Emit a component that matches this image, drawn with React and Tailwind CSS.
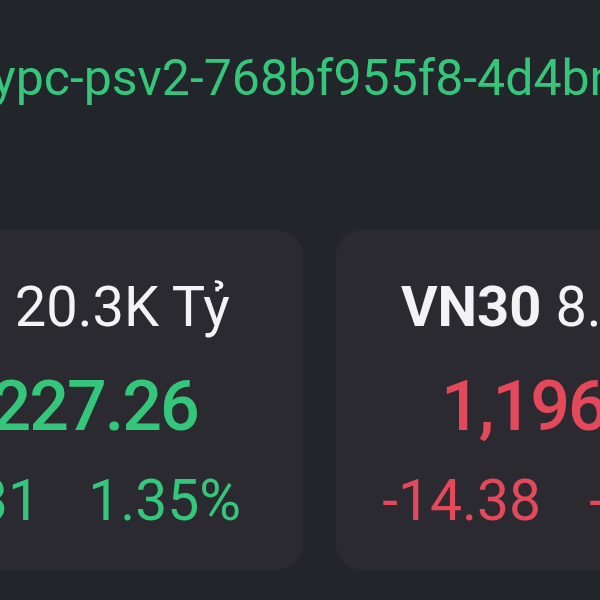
import React from 'react';

const cards = [
    { name: 'VNI', value: '20.3K Tỷ', price: '1,227.26', change: '16.31', percent: '1.35%', up: true },
    { name: 'VN30', value: '8.5K Tỷ', price: '1,196.66', change: '-14.38', percent: '-1.19%', up: false },
];

const IndexCard = ({ card }) => {
    const color = card.up ? 'text-[#34c77b]' : 'text-[#e4495b]';
    return (
        <div className="w-[468px] h-[340px] shrink-0 rounded-[26px] bg-[#2b2a30] pt-[49px] flex flex-col items-center">
            <div className="flex items-baseline whitespace-nowrap text-[56px] leading-none text-[#f3f3f5]">
                <span className="font-bold">{card.name}</span>
                <span className="ml-[14px]">{card.value}</span>
            </div>
            <div className={`mt-[36px] whitespace-nowrap text-[70px] leading-none font-medium tracking-[-2px] ${color}`}>
                {card.price}
            </div>
            <div className={`mt-[31px] flex gap-[48px] whitespace-nowrap text-[57px] leading-none ${color}`}>
                <span>{card.change}</span>
                <span>{card.percent}</span>
            </div>
        </div>
    );
};

export default function App() {
    return (
        <div className="w-[600px] h-[600px] overflow-hidden bg-[#22252a] font-['Roboto',sans-serif]">
            <div className="pt-[53px] ml-[-8px] whitespace-nowrap text-[50px] leading-none text-[#34c77b]">
                ypc-psv2-768bf955f8-4d4bn
            </div>
            <div className="mt-[127px] ml-[-165px] flex gap-[33px]">
                {cards.map(card => (
                    <IndexCard key={card.name} card={card} />
                ))}
            </div>
        </div>
    );
}
